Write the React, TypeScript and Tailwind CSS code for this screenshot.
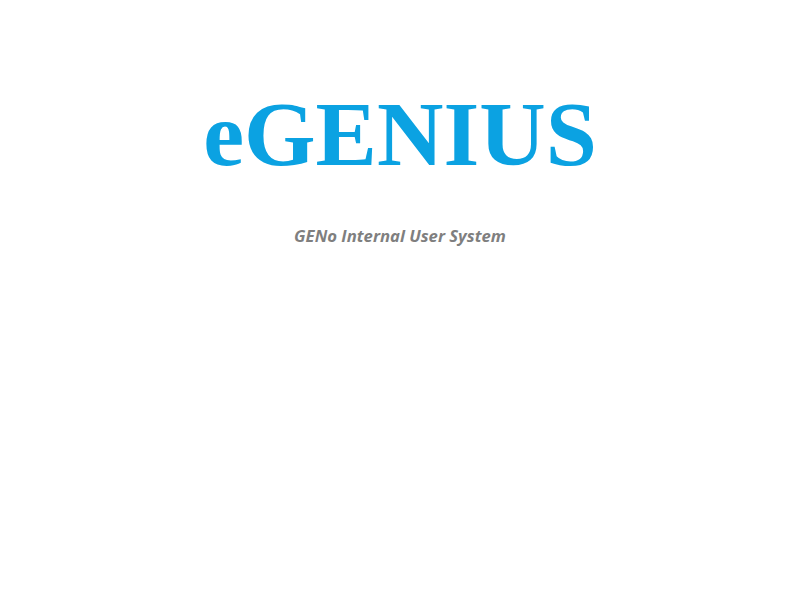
export default function App() {
  return (
    <main className="min-h-screen bg-white flex flex-col items-center pt-[78px]">
      {/* Logo */}
      <h1 className="text-[92px] leading-[112px] font-bold text-[#0ba2e2] font-['Liberation_Serif',serif]">
        eGENIUS
      </h1>
      <p className="mt-[36px] text-[16.7px] leading-5 font-bold italic text-[#7f7f7f] font-['Open_Sans',sans-serif]">
        GENo Internal User System
      </p>
    </main>
  );
}
